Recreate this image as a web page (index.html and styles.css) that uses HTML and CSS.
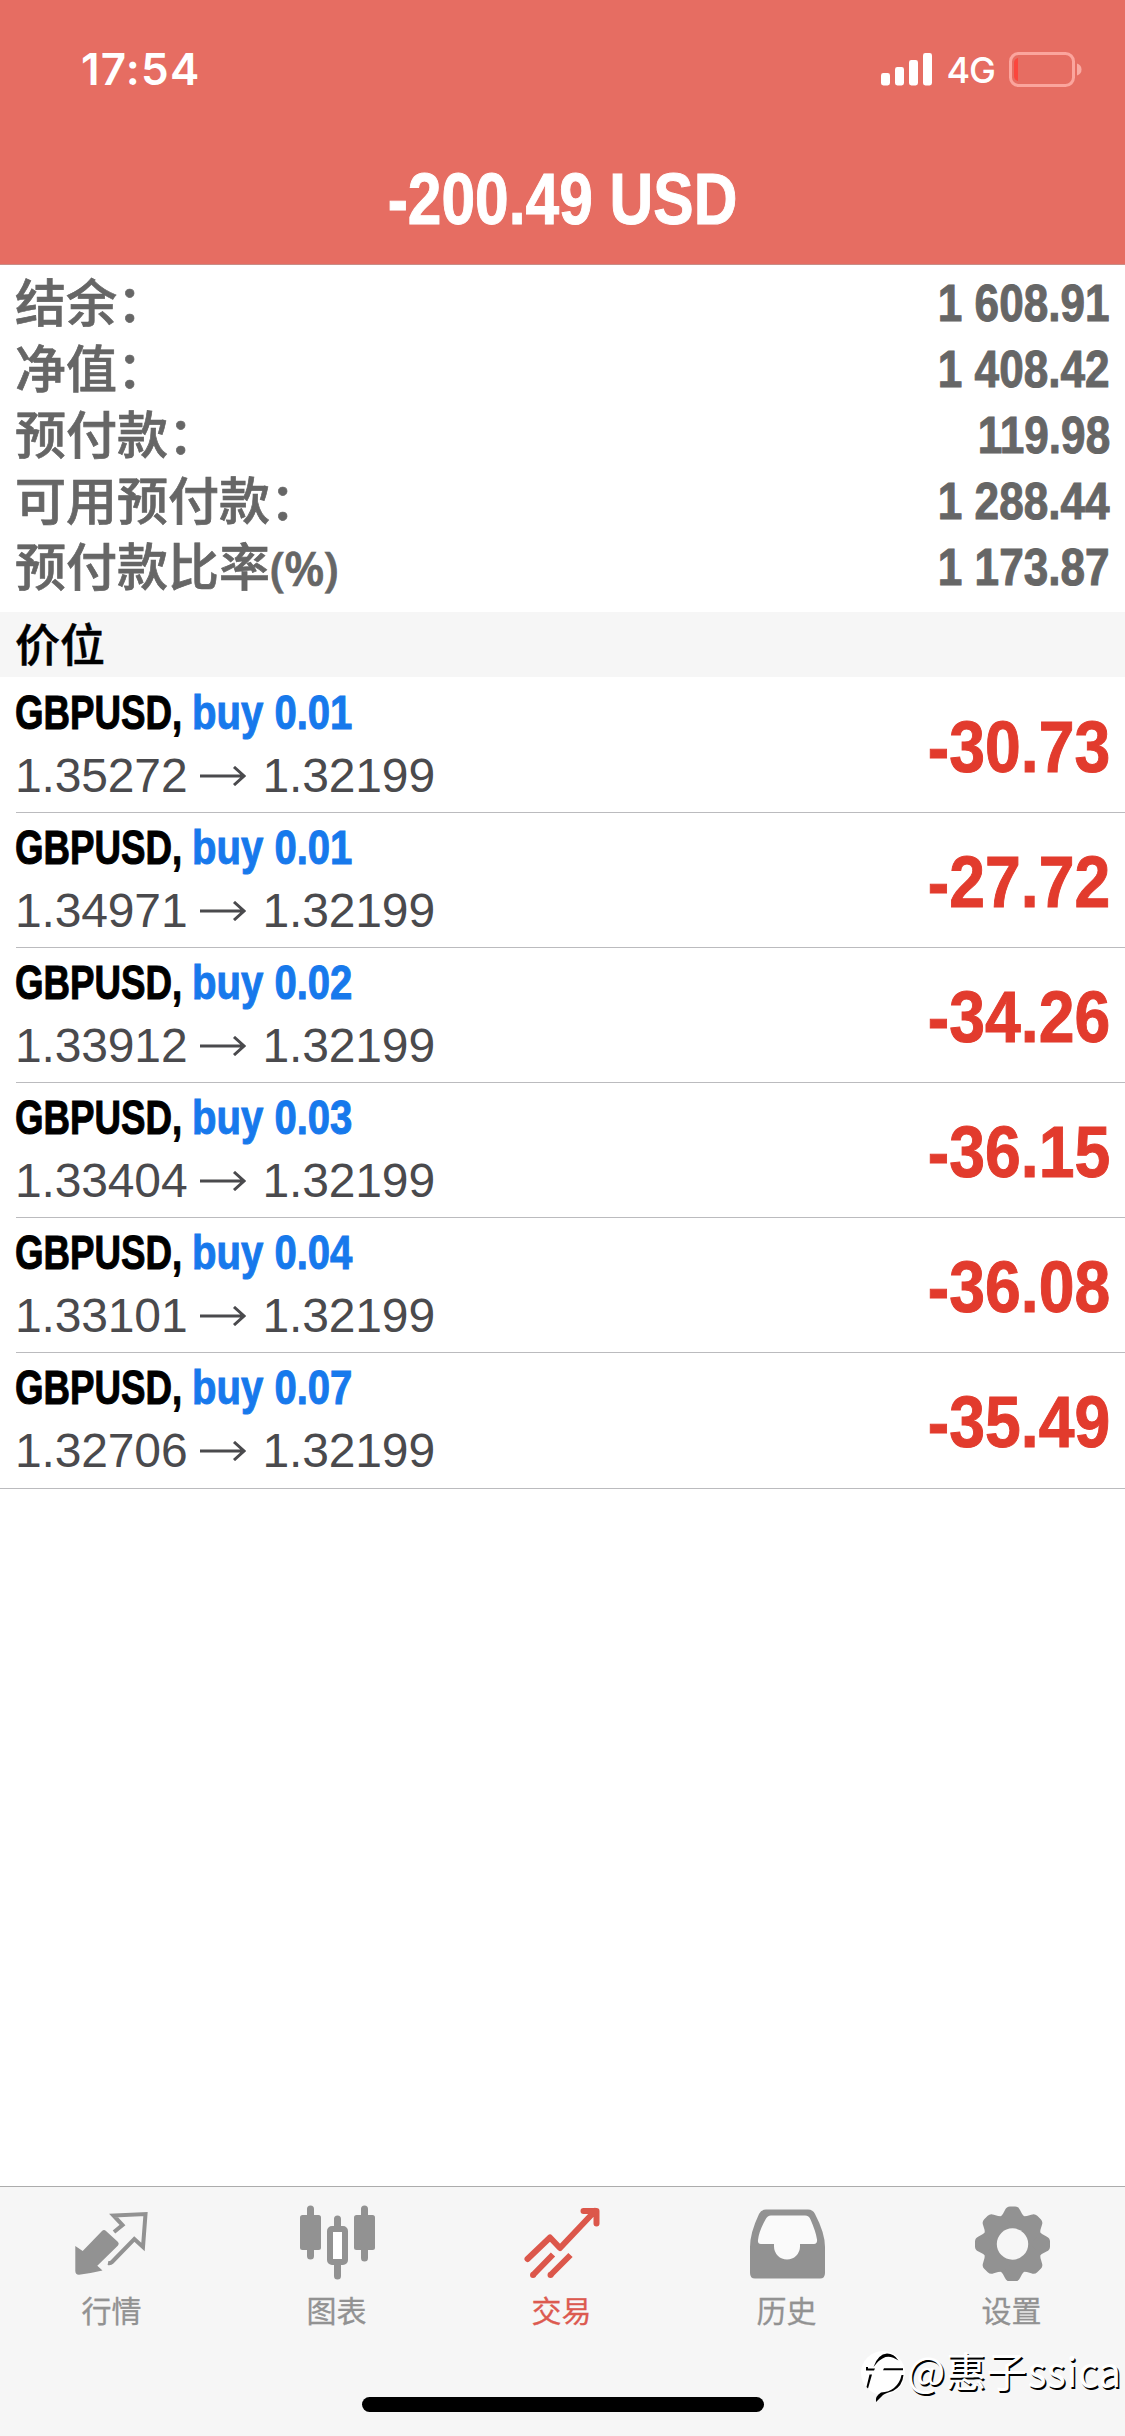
FILE: index.html
```html
<!DOCTYPE html>
<html lang="zh-CN">
<head>
<meta charset="utf-8">
<title>交易</title>
<link rel="stylesheet" href="styles.css">
</head>
<body>
<div class="screen">
  <header class="header">
    <div class="status">
      <span class="time">17:54</span>
      <div class="indicators">
        <svg class="signal" width="51" height="33" viewBox="0 0 51 33" fill="#fff"><rect x="0" y="20" width="9" height="12.500" rx="2.400"/><rect x="14" y="14" width="9" height="18.500" rx="2.400"/><rect x="28" y="7" width="9" height="25.500" rx="2.400"/><rect x="42" y="0" width="9" height="32.500" rx="2.400"/></svg>
        <span class="network">4G</span>
        <svg class="battery" width="73" height="35" viewBox="0 0 73 35"><rect x="1.500" y="1.500" width="63" height="32" rx="8" fill="none" stroke="#fba59d" stroke-width="3"/><path d="M9 6v23q-4-1-4-5V11q0-4 4-5z" fill="#fb463d"/><path d="M68 11.500q4.500 1.500 4.500 6t-4.500 6z" fill="#f9aaa2"/></svg>
      </div>
    </div>
    <h1 class="total">-200.49 USD</h1>
  </header>

  <section class="summary">
    <div class="line"><span class="label">结余：</span><span class="num">1 608.91</span></div>
    <div class="line"><span class="label">净值：</span><span class="num">1 408.42</span></div>
    <div class="line"><span class="label">预付款：</span><span class="num">119.98</span></div>
    <div class="line"><span class="label">可用预付款：</span><span class="num">1 288.44</span></div>
    <div class="line"><span class="label">预付款比率<span class="pct">(%)</span></span><span class="num">1 173.87</span></div>
  </section>

  <h2 class="section">价位</h2>

  <ul class="positions">
    <li class="position"><div class="info"><div class="title"><span class="symbol">GBPUSD,</span><span class="side">buy 0.01</span></div><div class="prices">1.35272<svg class="arrow" viewBox="0 0 46 20"><path d="M0 10h44M34 1l10 9l-10 9"/></svg>1.32199</div></div><div class="profit">-30.73</div></li>
    <li class="position"><div class="info"><div class="title"><span class="symbol">GBPUSD,</span><span class="side">buy 0.01</span></div><div class="prices">1.34971<svg class="arrow" viewBox="0 0 46 20"><path d="M0 10h44M34 1l10 9l-10 9"/></svg>1.32199</div></div><div class="profit">-27.72</div></li>
    <li class="position"><div class="info"><div class="title"><span class="symbol">GBPUSD,</span><span class="side">buy 0.02</span></div><div class="prices">1.33912<svg class="arrow" viewBox="0 0 46 20"><path d="M0 10h44M34 1l10 9l-10 9"/></svg>1.32199</div></div><div class="profit">-34.26</div></li>
    <li class="position"><div class="info"><div class="title"><span class="symbol">GBPUSD,</span><span class="side">buy 0.03</span></div><div class="prices">1.33404<svg class="arrow" viewBox="0 0 46 20"><path d="M0 10h44M34 1l10 9l-10 9"/></svg>1.32199</div></div><div class="profit">-36.15</div></li>
    <li class="position"><div class="info"><div class="title"><span class="symbol">GBPUSD,</span><span class="side">buy 0.04</span></div><div class="prices">1.33101<svg class="arrow" viewBox="0 0 46 20"><path d="M0 10h44M34 1l10 9l-10 9"/></svg>1.32199</div></div><div class="profit">-36.08</div></li>
    <li class="position"><div class="info"><div class="title"><span class="symbol">GBPUSD,</span><span class="side">buy 0.07</span></div><div class="prices">1.32706<svg class="arrow" viewBox="0 0 46 20"><path d="M0 10h44M34 1l10 9l-10 9"/></svg>1.32199</div></div><div class="profit">-35.49</div></li>
  </ul>

  <footer class="footer">
    <nav class="tabs">
      <a class="tab">
        <svg class="icon" viewBox="0 0 76 76"><path d="M1.300 41l7.400 5L28 26q2-2 4 0l12 11q1.500 1.700 0 3.500L23.300 60.700 28.500 65.500Q16 68.500 5 69.700q-3.700 0-3.700-4z" fill="#929292"/><path d="M40 27l8.500-7-9-9.500L71.500 9 69 42 60.300 34 38 57q-1.500 1.500-4 1" fill="none" stroke="#929292" stroke-width="4"/></svg>
        <span>行情</span>
      </a>
      <a class="tab">
        <svg class="icon" viewBox="0 0 76 76"><g stroke="#929292" stroke-width="7" stroke-linecap="round"><path d="M11.500 4v47M38.500 14v9M38.500 60v11M65.500 4v49"/></g><rect x="1" y="10" width="21" height="35" rx="2.500" fill="#929292"/><rect x="55" y="10" width="21" height="35" rx="2.500" fill="#929292"/><rect x="31" y="24" width="15" height="33" rx="2" fill="#fff" stroke="#929292" stroke-width="6"/></svg>
        <span>图表</span>
      </a>
      <a class="tab active">
        <svg class="icon" viewBox="0 0 76 76"><g fill="none" stroke="#dc574b" stroke-width="6" stroke-linecap="round"><path d="M3.500 54l22.500-21.500L36 43 71 6M59.500 6H72.500V18.500" stroke-linejoin="round"/><path d="M9 70l20-20.500M26.500 70l20-20" stroke-linecap="butt"/><path d="M9 70h.1M26.500 70h.1"/></g></svg>
        <span>交易</span>
      </a>
      <a class="tab">
        <svg class="icon" viewBox="0 0 76 76"><path d="M17 4.500h42q5 0 7 4.500 10 19 10 33v26q0 5.500-5 5.500H6q-5 0-5-5.500V42q0-14 9-33 2-4.500 7-4.500z" fill="#929292"/><path d="M22 10.500h34q4 0 5.500 4Q67 27 68 34.500q.5 4.500-3 4.500H51v2.500a13 13 0 0 1-26 0V39H12q-3.500 0-3-4Q10 26 16.500 14.500q2-4 5.500-4z" fill="#fafafa"/></svg>
        <span>历史</span>
      </a>
      <a class="tab">
        <svg class="icon" viewBox="0 0 76 76"><g transform="translate(38.500 39)" fill="#929292"><circle r="28"/><g id="t"><path id="p" d="M-13-26Q-9-30-7.500-34-6-37.500-2.500-37.500H2.500Q6-37.500 7.500-34 9-30 13-26V26Q9 30 7.500 34 6 37.500 2.500 37.500H-2.500Q-6 37.500-7.500 34-9 30-13 26z"/><use href="#p" transform="rotate(90)"/></g><use href="#t" transform="rotate(45)"/><circle r="15.700" fill="#f6f6f6"/></g></svg>
        <span>设置</span>
      </a>
    </nav>
    <div class="home"></div>
    <div class="watermark">
      <svg class="mark" width="45" height="56" viewBox="0 0 45 56"><circle cx="22" cy="24" r="22" fill="#fff"/><path d="M12.500 18Q17 5 26 4.500q7 0 11.500 7-7-5-13-3.500-6 2-12 10zM5 18h2v1.500h7l-1 2H5zM23 19.300h19v2H22zM8.500 25.500h2.500L7 39.500 5.500 38zM40.500 26h2q-1 11-10.500 16-7 2-10 4l-7 7q-1-6 5-9.500 8-.5 13-4.500 6-5 7.500-13z" fill="#000"/></svg><span>@惠子ssica</span>
    </div>
  </footer>
</div>
</body>
</html>
```
FILE: styles.css
```css
* { box-sizing: border-box; }
body { margin: 0; background: #fff; }
.screen {
  width: 1125px;
  height: 2436px;
  display: flex;
  flex-direction: column;
  overflow: hidden;
  font-family: "Liberation Sans", "Noto Sans CJK SC", sans-serif;
}
.header {
  height: 265px;
  flex: none;
  background: #e66d62;
  border-bottom: 1px solid #c98d87;
  color: #fff;
}
.status {
  height: 138px;
  padding: 0 43px 0 81px;
  display: flex;
  justify-content: space-between;
  align-items: center;
}
.time {
  font: 600 44px/50px Inter, sans-serif;
  letter-spacing: 1.2px;
}
.indicators { display: flex; align-items: center; }
.network {
  margin: 1px 14px 0 14px;
  font: 500 36px/44px Inter, sans-serif;
  letter-spacing: -1px;
}
.total, .num, .title, .profit { font-weight: 700; -webkit-text-stroke: 1px currentColor; }
.total {
  margin: 0;
  padding-top: 19px;
  font-size: 72px;
  line-height: 84px;
  text-align: center;
  transform: scaleX(0.84);
}
.summary { height: 347px; flex: none; padding: 6px 15px 0 16px; }
.line {
  height: 66px;
  display: flex;
  justify-content: space-between;
  color: #666;
  line-height: 66px;
}
.label {
  margin: -4px 0 0 -1px;
  font: 500 51px/66px "Noto Sans CJK SC", sans-serif;
  -webkit-text-stroke: 0.7px currentColor;
}
.pct { font: 600 47px/60px "Open Sans", sans-serif; letter-spacing: -1px; }
.num { font-size: 51px; transform: scaleX(0.865); transform-origin: right; }
.section {
  margin: 0;
  height: 65px;
  flex: none;
  padding-left: 15px;
  background: #f6f6f6;
  font: 500 45px/62px "Noto Sans CJK SC", sans-serif;
  -webkit-text-stroke: 0.5px currentColor;
}
.positions {
  margin: 0;
  padding: 1px 0 0;
  list-style: none;
  border-bottom: 1px solid #bbbbbe;
}
.position {
  height: 135px;
  margin-left: 16px;
  padding-right: 15px;
  display: flex;
  justify-content: space-between;
  border-bottom: 1px solid #bbbbbe;
}
.position:last-child { border-bottom: 0; }
.title { display: flex; padding-top: 7px; font-size: 48px; line-height: 56px; }
.symbol {
  width: 177px;
  margin-left: -1px;
  transform: scaleX(0.765);
  transform-origin: left;
}
.side { color: #1779ec; transform: scaleX(0.835); transform-origin: left; }
.prices {
  display: flex;
  align-items: center;
  margin-left: -1px;
  font-size: 48px;
  line-height: 69px;
  letter-spacing: -0.15px;
  color: #4a4a4d;
}
.arrow {
  width: 46px;
  height: 20px;
  margin: 0 16px 0 13px;
  fill: none;
  stroke: #4a4a4d;
  stroke-width: 3;
}
.profit {
  color: #e23b2d;
  font-size: 72px;
  line-height: 138px;
  transform: scaleX(0.893);
  transform-origin: right;
}
.footer {
  position: relative;
  height: 250px;
  flex: none;
  margin-top: auto;
  border-top: 1px solid #acacac;
  background: #f6f6f6;
}
.tabs {
  display: grid;
  grid-template-columns: repeat(5, 225px);
  height: 217px;
  margin-left: -1px;
}
.tab {
  display: flex;
  flex-direction: column;
  align-items: center;
  padding-top: 18px;
  color: #929292;
  font: 400 30px/40px "Noto Sans CJK SC", sans-serif;
  -webkit-text-stroke: 0.3px currentColor;
}
.active { color: #dc5a50; }
.icon { width: 76px; height: 76px; margin-bottom: 8px; flex: none; }
.home { width: 402px; height: 15px; margin: -7px auto 0; border-radius: 8px; background: #000; }
.watermark {
  position: absolute;
  left: 861px;
  top: 162px;
  display: flex;
  color: #fff;
  font: 400 40.5px/42px "Noto Sans CJK SC", sans-serif;
  letter-spacing: 0.4px;
  text-shadow: 1.5px 1.5px 0 #000;
  white-space: nowrap;
}
.mark { flex: none; margin-right: 1px; }
```
